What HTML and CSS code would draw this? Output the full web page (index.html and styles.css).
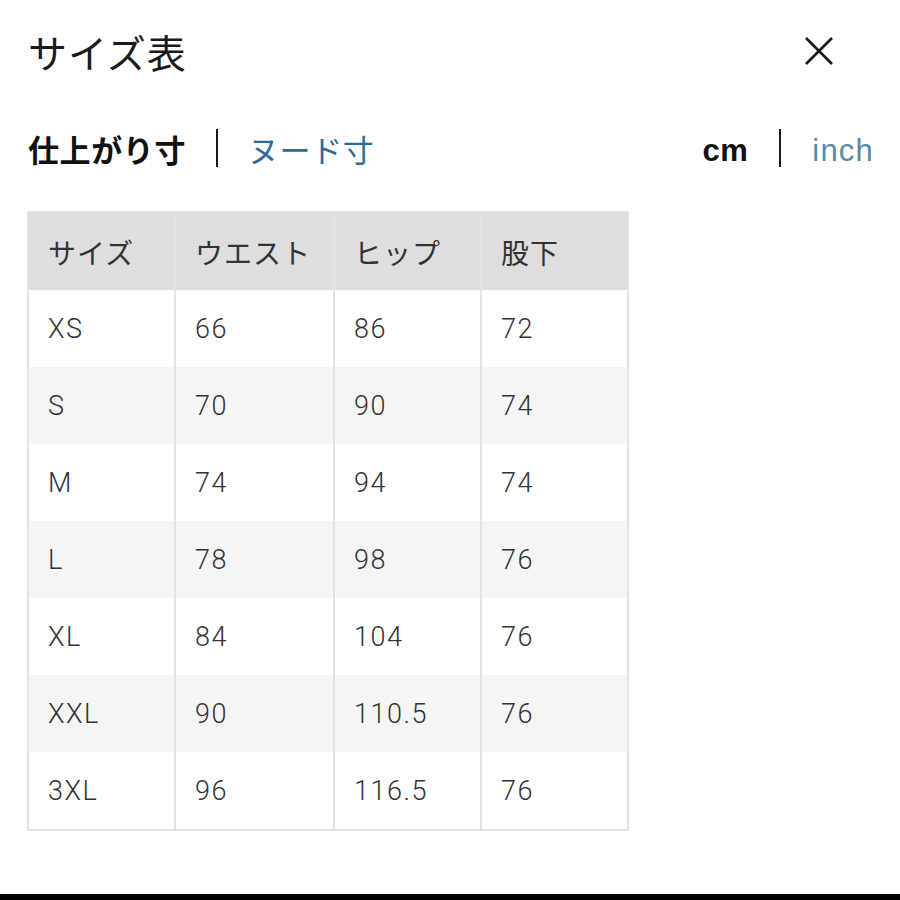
FILE: index.html
```html
<!DOCTYPE html>
<html lang="ja">
<head>
<meta charset="utf-8">
<title>サイズ表</title>
<link rel="stylesheet" href="styles.css">
</head>
<body>
<div class="page">
  <header class="top">
    <h1 class="title">サイズ表</h1>
    <button class="close" aria-label="閉じる">
      <svg width="30" height="30" viewBox="0 0 30 30"><path d="M2 2 L28 28 M28 2 L2 28" stroke="#1a1a1a" stroke-width="2.6" fill="none"/></svg>
    </button>
  </header>
  <div class="tabs">
    <div class="group">
      <span class="tab active">仕上がり寸</span>
      <span class="sep"></span>
      <span class="tab link">ヌード寸</span>
    </div>
    <div class="group units">
      <span class="unit active">cm</span>
      <span class="sep"></span>
      <span class="unit link">inch</span>
    </div>
  </div>
  <table class="sizes">
    <colgroup><col class="c1"><col class="c2"><col class="c3"><col class="c4"></colgroup>
    <thead>
      <tr><th>サイズ</th><th>ウエスト</th><th>ヒップ</th><th>股下</th></tr>
    </thead>
    <tbody>
      <tr><td>XS</td><td>66</td><td>86</td><td>72</td></tr>
      <tr><td>S</td><td>70</td><td>90</td><td>74</td></tr>
      <tr><td>M</td><td>74</td><td>94</td><td>74</td></tr>
      <tr><td>L</td><td>78</td><td>98</td><td>76</td></tr>
      <tr><td>XL</td><td>84</td><td>104</td><td>76</td></tr>
      <tr><td>XXL</td><td>90</td><td>110.5</td><td>76</td></tr>
      <tr><td>3XL</td><td>96</td><td>116.5</td><td>76</td></tr>
    </tbody>
  </table>
  <div class="bottom-bar"></div>
</div>
</body>
</html>
```
FILE: styles.css
```css
html, body {
  margin: 0;
  padding: 0;
  background: #fff;
}
.page {
  min-height: 100vh;
  display: flex;
  flex-direction: column;
  font-family: "Noto Sans CJK JP", "Liberation Sans", sans-serif;
  color: #1a1a1a;
}
.top {
  display: flex;
  justify-content: space-between;
  align-items: center;
  padding: 29px 66px 0 28px;
  height: 44px;
}
.title {
  margin: 0;
  font-size: 39px;
  font-weight: 400;
  line-height: 1;
  letter-spacing: 1px;
}
.close {
  border: 0;
  background: none;
  padding: 0;
  width: 30px;
  height: 30px;
  display: block;
}
.close svg { display: block; }
.tabs {
  display: flex;
  justify-content: space-between;
  align-items: center;
  padding: 0 26px 0 28px;
  margin-top: 55px;
  height: 40px;
}
.group {
  display: flex;
  align-items: center;
  gap: 30px;
}
.units { gap: 31px; }
.tab {
  font-size: 31px;
  line-height: 1;
  letter-spacing: 0.6px;
}
.tab.active { font-weight: 700; color: #111; }
.tab.link { color: #2e6b9b; }
.sep {
  width: 2px;
  height: 38px;
  background: #1a1a1a;
}
.unit {
  font-family: "Liberation Sans", Arial, sans-serif;
  font-size: 31px;
  line-height: 1;
  position: relative;
  top: 2px;
}
.unit.active { font-weight: 700; color: #111; letter-spacing: 0.5px; }
.unit.link { color: #5b8aa6; letter-spacing: 1.2px; }
.sizes {
  margin: 43px 0 0 27px;
  border-collapse: collapse;
  border: 2px solid #e3e3e3;
  width: 600px;
  table-layout: fixed;
}
.c1 { width: 147px; }
.c2 { width: 159px; }
.c3 { width: 147px; }
.c4 { width: 147px; }
.sizes th, .sizes td {
  border-left: 2px solid #e3e3e3;
  text-align: left;
  padding: 0 0 0 19px;
  color: #333;
}
.sizes th {
  background: #dedede;
  height: 77px;
  font-weight: 400;
  font-size: 28px;
  letter-spacing: 1px;
}
.sizes td {
  height: 77px;
  font-family: Roboto, "Liberation Sans", sans-serif;
  font-weight: 300;
  font-size: 27px;
  letter-spacing: 1.5px;
  color: #333;
}
.sizes tbody tr:nth-child(even) td { background: #f5f5f5; }
.bottom-bar {
  margin-top: auto;
  height: 6px;
  background: #000;
}
```
